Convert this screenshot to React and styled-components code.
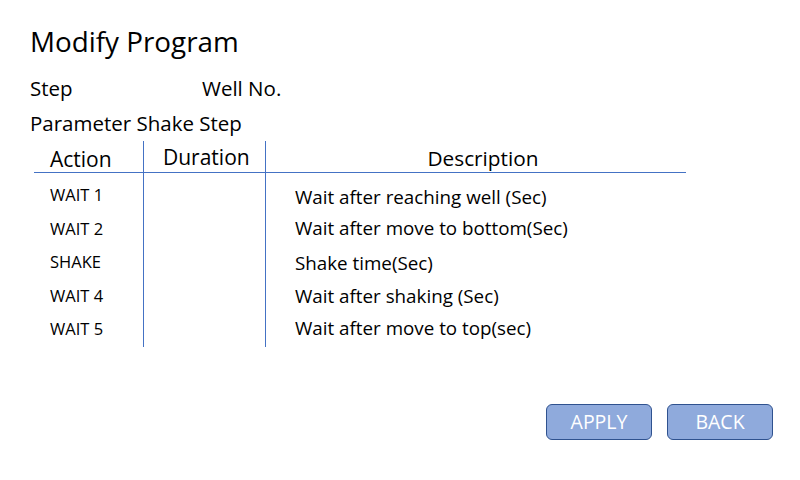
import React from "react";
import styled, { createGlobalStyle } from "styled-components";

const Global = createGlobalStyle`
  html, body { margin: 0; padding: 0; background: #ffffff; }
  body { font-family: "Open Sans", Lato, "Liberation Sans", sans-serif; color: #000; }
`;

const Page = styled.div`
  width: 800px;
  height: 480px;
  box-sizing: border-box;
  padding: 22px 0 0 30px;
  display: flex;
  flex-direction: column;
`;

const Title = styled.h1`
  margin: 0;
  font-size: 27.8px;
  font-weight: 400;
  line-height: 38px;
`;

const InfoRow = styled.div`
  display: flex;
  margin-top: ${(p) => p.$top}px;
  font-size: 20.5px;
  line-height: 24px;
  white-space: nowrap;
`;

const InfoLabel = styled.span`
  width: ${(p) => (p.$w ? `${p.$w}px` : "auto")};
`;

const Table = styled.div`
  margin: 6px 0 0 4px;
  width: 652px;
  display: grid;
  grid-template-columns: 109px 122px 1fr;
`;

const HeadCell = styled.div`
  height: 32px;
  box-sizing: border-box;
  border-bottom: 1.5px solid #4472c4;
  border-left: ${(p) => (p.$line ? "1.5px solid #4472c4" : "none")};
  font-size: ${(p) => p.$size}px;
  line-height: 1;
  display: flex;
  align-items: flex-end;
  justify-content: ${(p) => (p.$center ? "center" : "flex-start")};
  padding: ${(p) => p.$pad};
  white-space: nowrap;
`;

const Column = styled.div`
  box-sizing: border-box;
  border-left: ${(p) => (p.$line ? "1.5px solid #4472c4" : "none")};
  padding: 6px 0 0 ${(p) => p.$pl}px;
  display: flex;
  flex-direction: column;
`;

const Cell = styled.div`
  height: 33.5px;
  display: flex;
  align-items: center;
  font-size: ${(p) => p.$size}px;
  white-space: nowrap;
  transform: translateY(${(p) => p.$dy || 0}px);
`;

const Actions = styled.div`
  display: flex;
  justify-content: flex-end;
  gap: 15px;
  margin: 57px 27px 0 0;
`;

const Button = styled.button`
  width: 106px;
  height: 36px;
  border: 1.5px solid #2f528f;
  border-radius: 6px;
  background: #8faadc;
  color: #ffffff;
  font-family: inherit;
  font-size: 19.5px;
  padding: 0;
  cursor: pointer;
`;

const rows = [
  ["WAIT 1", "Wait after reaching well (Sec)", 1],
  ["WAIT 2", "Wait after move to bottom(Sec)", -1],
  ["SHAKE", "Shake time(Sec)", 0],
  ["WAIT 4", "Wait after shaking (Sec)", 0],
  ["WAIT 5", "Wait after move to top(sec)", -2],
];

export default function App() {
  return (
    <>
      <Global />
      <Page>
        <Title>Modify Program</Title>
        <InfoRow $top={16}>
          <InfoLabel $w={172}>Step</InfoLabel>
          <InfoLabel>Well No.</InfoLabel>
        </InfoRow>
        <InfoRow $top={11}>
          <InfoLabel>Parameter Shake Step</InfoLabel>
        </InfoRow>
        <Table>
          <HeadCell $size={21} $pad="0 0 2px 16px">Action</HeadCell>
          <HeadCell $size={21} $line $pad="0 0 4px 19px">Duration</HeadCell>
          <HeadCell $size={20.8} $line $center $pad="0 0 3px 14px">Description</HeadCell>
          <Column $pl={16}>
            {rows.map(([a]) => (
              <Cell key={a} $size={16.5} $dy={-1}>{a}</Cell>
            ))}
          </Column>
          <Column $line $pl={0}>
            {rows.map(([a]) => (
              <Cell key={a} $size={16.5} />
            ))}
          </Column>
          <Column $line $pl={29}>
            {rows.map(([a, d, dy]) => (
              <Cell key={a} $size={18.8} $dy={dy}>{d}</Cell>
            ))}
          </Column>
        </Table>
        <Actions>
          <Button>APPLY</Button>
          <Button>BACK</Button>
        </Actions>
      </Page>
    </>
  );
}
